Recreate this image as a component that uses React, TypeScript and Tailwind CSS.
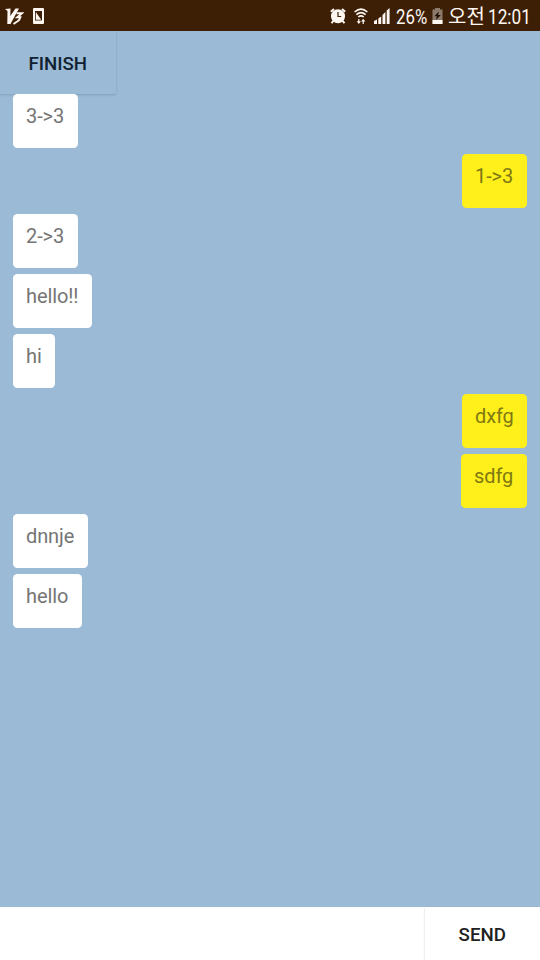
type Message = { text: string; mine?: boolean; width: string };

const messages: Message[] = [
  { text: "3->3", width: "w-[65px]" },
  { text: "1->3", mine: true, width: "w-[64.5px]" },
  { text: "2->3", width: "w-[65px]" },
  { text: "hello!!", width: "w-[79px]" },
  { text: "hi", width: "w-[42px]" },
  { text: "dxfg", mine: true, width: "w-[64.5px]" },
  { text: "sdfg", mine: true, width: "w-[65.5px]" },
  { text: "dnnje", width: "w-[75px]" },
  { text: "hello", width: "w-[69px]" },
];

function VaccineIcon() {
  return (
    <svg className="ml-[5px] h-[17px] w-[19px]" viewBox="0 0 19 17" fill="none" stroke="currentColor">
      <path d="M0 1L5.5 0.5L5.3 8L10.5 0.5H14L5.5 16H2.3L2.5 3Z" fill="currentColor" stroke="none" />
      <path d="M11.5 5.2H17L12.3 9.3H15.3L14 12.2L8.5 16" strokeWidth="2" />
    </svg>
  );
}

function PhoneIcon() {
  return (
    <svg className="ml-[9px] h-[16px] w-[11px]" viewBox="0 0 11 16">
      <rect width="11" height="16" rx="1" fill="currentColor" />
      <path d="M2 3H9V12.5H2Z" fill="#3d1f06" />
      <path d="M2.8 4L8.2 11.7H2.8Z" fill="currentColor" />
    </svg>
  );
}

function AlarmIcon() {
  return (
    <svg className="h-[16px] w-[16px]" viewBox="0 0 16 16" fill="none" stroke="currentColor">
      <circle cx="8" cy="8.2" r="7" fill="currentColor" stroke="none" />
      <path d="M.8 3.7L4 1M15.2 3.7L12 1M3.3 12.8L1.6 15.3M12.7 12.8L14.4 15.3" strokeWidth="2" />
      <path d="M8 4V8.5H11.2" stroke="#3d1f06" strokeWidth="1.2" />
    </svg>
  );
}

function WifiIcon() {
  return (
    <svg className="ml-[8px] h-[17px] w-[14px]" viewBox="0 0 14 17" fill="none" stroke="currentColor" strokeWidth="1.6">
      <path d="M.6 4Q7-1.6 13.4 4M2.4 6.6Q7 2.6 11.6 6.6M4.3 9Q7 6.7 9.7 9" />
      <path d="M4.8 11V15M9.2 16V12" strokeWidth="1.2" />
      <path d="M2.7 13.2H6.9L4.8 16ZM7.1 13.6H11.3L9.2 10.8Z" fill="currentColor" stroke="none" />
    </svg>
  );
}

function SignalIcon() {
  return (
    <svg className="ml-[6px] h-[16px] w-[16px]" viewBox="0 0 16 16" fill="currentColor">
      <path d="M0 13L3 11.5V16H0ZM4.3 10.5L7.2 8.5V16H4.3ZM8.5 7L11.4 4V16H8.5ZM12.7 2.5L15.6 0V16H12.7Z" />
    </svg>
  );
}

function BatteryIcon() {
  return (
    <svg className="ml-[5px] h-[16px] w-[11px]" viewBox="0 0 11 16">
      <path d="M3 0H8V1.5H10.5V16H.5V1.5H3Z" fill="#8d7a6b" />
      <path d="M.5 12H10.5V16H.5Z" fill="currentColor" />
      <path d="M6.8 3.5L2.3 8.3H4.9L4 12L8.8 7H6.2Z" fill="#211006" />
    </svg>
  );
}

function StatusBar() {
  return (
    <header className="flex h-[31px] items-center bg-[#3d1f06] pt-px text-[20px] leading-none text-[#fff8f2]">
      <VaccineIcon />
      <PhoneIcon />
      <div className="ml-auto mr-px flex items-center">
        <AlarmIcon />
        <WifiIcon />
        <SignalIcon />
        <span className="ml-[6px] w-[31px] whitespace-nowrap pt-px">
          <span className="inline-block origin-left scale-x-[0.84]">26%</span>
        </span>
        <BatteryIcon />
        <span className="ml-[5px] w-[36px] whitespace-nowrap font-['Noto_Sans_CJK_KR',sans-serif] text-[20px]">오전</span>
        <span className="ml-[4px] w-[51px] whitespace-nowrap pt-px">
          <span className="inline-block origin-left scale-x-[0.86]">12:01</span>
        </span>
      </div>
    </header>
  );
}

export default function App() {
  return (
    <div className="flex h-[960px] w-[540px] flex-col overflow-hidden bg-[#9bbad5] font-[Roboto,sans-serif]">
      <StatusBar />
      <button className="h-[63px] w-[115.5px] shrink-0 pt-[3px] text-[18.67px] font-medium text-[#102231] shadow-[0_1px_2px_rgba(50,75,100,0.22)]">
        FINISH
      </button>
      <main className="flex flex-1 flex-col gap-[6.5px] px-[13px] pt-[0.4px]">
        {messages.map(({ text, mine, width }) => (
          <div
            key={text}
            className={`h-[53.5px] shrink-0 whitespace-nowrap rounded-[4.5px] pl-[13px] pt-[9.4px] text-[20px] leading-6 tracking-[-0.1px] ${width} ${
              mine ? "mr-[0.5px] self-end bg-[#fff01c] text-[#807811]" : "bg-white text-[#757575]"
            }`}
          >
            {text}
          </div>
        ))}
      </main>
      <footer className="flex h-[52.6px] shrink-0 bg-white">
        <input aria-label="Message" className="min-w-0 flex-1 outline-none" />
        <button className="w-[115.5px] pt-[2px] text-[18.67px] font-medium text-[#212121] shadow-[0_1px_2px_rgba(0,0,0,0.2)]">
          SEND
        </button>
      </footer>
    </div>
  );
}
